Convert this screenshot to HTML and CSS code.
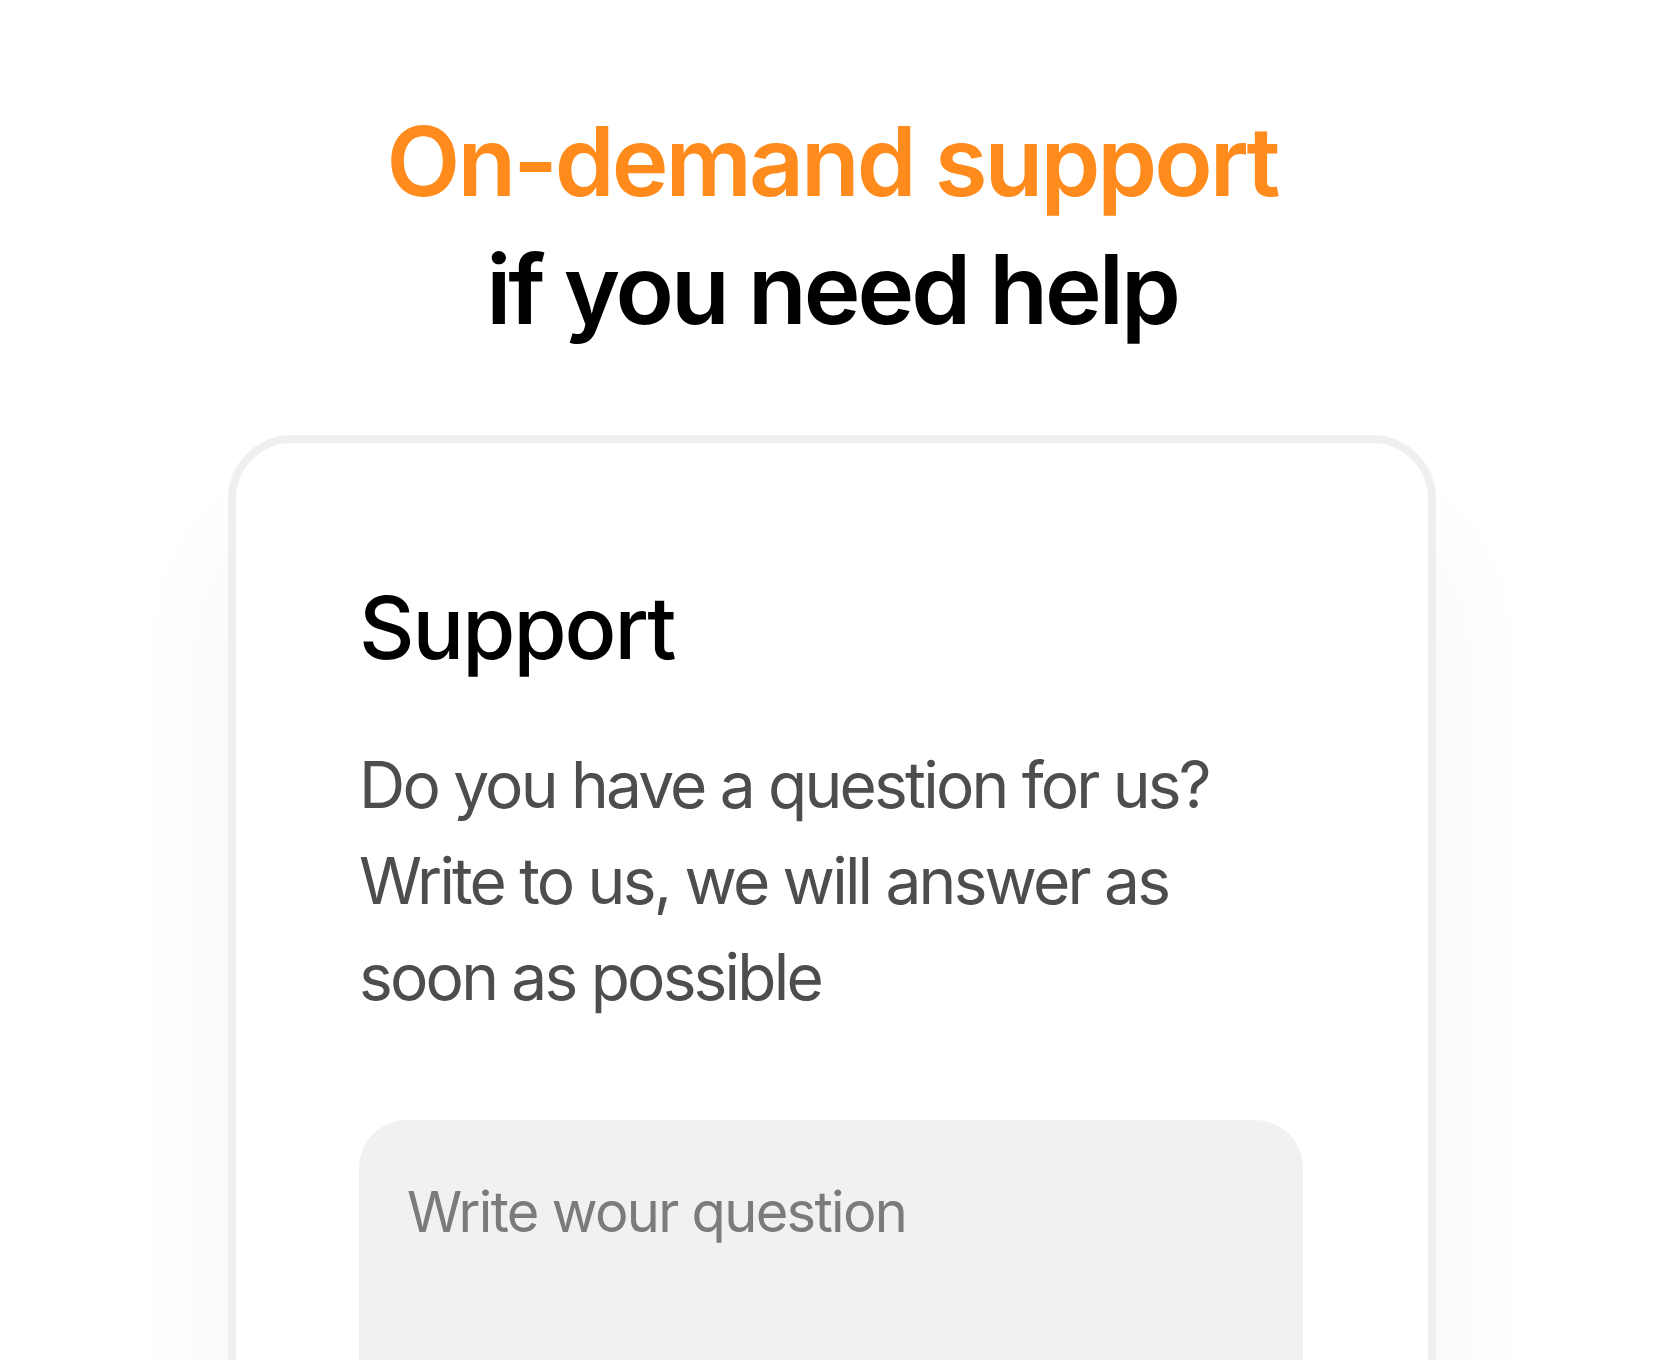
FILE: index.html
```html
<html>

<head>
    <link rel="stylesheet" href="styles.css">
    <title>Support</title>
</head>

<body>
    <main class="page">
        <h1 class="headline">
            <span class="accent">On-demand support</span><br>
            if you need help
        </h1>

        <section class="card">
            <h2 class="card-title">Support</h2>
            <p class="card-text">Do you have a question for us?<br>
                Write to us, we will answer as<br>
                soon as possible</p>
            <textarea class="question" placeholder="Write wour question"></textarea>
        </section>
    </main>
</body>

</html>
```

FILE: styles.css
```css
body {
    margin: 0;
    padding: 0;
    background-color: #fff;
    font-family: "Inter", "Liberation Sans", sans-serif;
    color: #000;
    overflow: hidden;
}

.page {
    display: flex;
    flex-direction: column;
    align-items: center;
    padding-top: 97px;
}

.headline {
    margin: 0;
    font-size: 96px;
    line-height: 128px;
    font-weight: 600;
    text-align: center;
    letter-spacing: -3px;
}

.headline .accent {
    color: #ff8b1c;
}

.card {
    margin-top: 82px;
    width: 1208px;
    box-sizing: border-box;
    padding: 134px 125px 200px 123px;
    border: 8px solid #efefef;
    border-radius: 64px;
    background-color: #fff;
    box-shadow: 0 100px 120px rgba(0, 0, 0, 0.045);
}

.card-title {
    margin: 0;
    font-size: 86px;
    line-height: 1.2;
    font-weight: 500;
    letter-spacing: -2px;
}

.card-text {
    margin: 57px 0 0;
    font-size: 64px;
    line-height: 96px;
    color: #4d4d4d;
    letter-spacing: -2.8px;
}

.question {
    display: block;
    margin-top: 95px;
    width: 100%;
    height: 400px;
    box-sizing: border-box;
    padding: 50px 48px;
    border: none;
    border-radius: 48px;
    background-color: #f1f1f1;
    font-family: inherit;
    font-size: 56px;
    line-height: 1.5;
    letter-spacing: -1.7px;
    color: #333;
    resize: none;
    outline: none;
}

.question::placeholder {
    color: #7b7b7b;
}
```
